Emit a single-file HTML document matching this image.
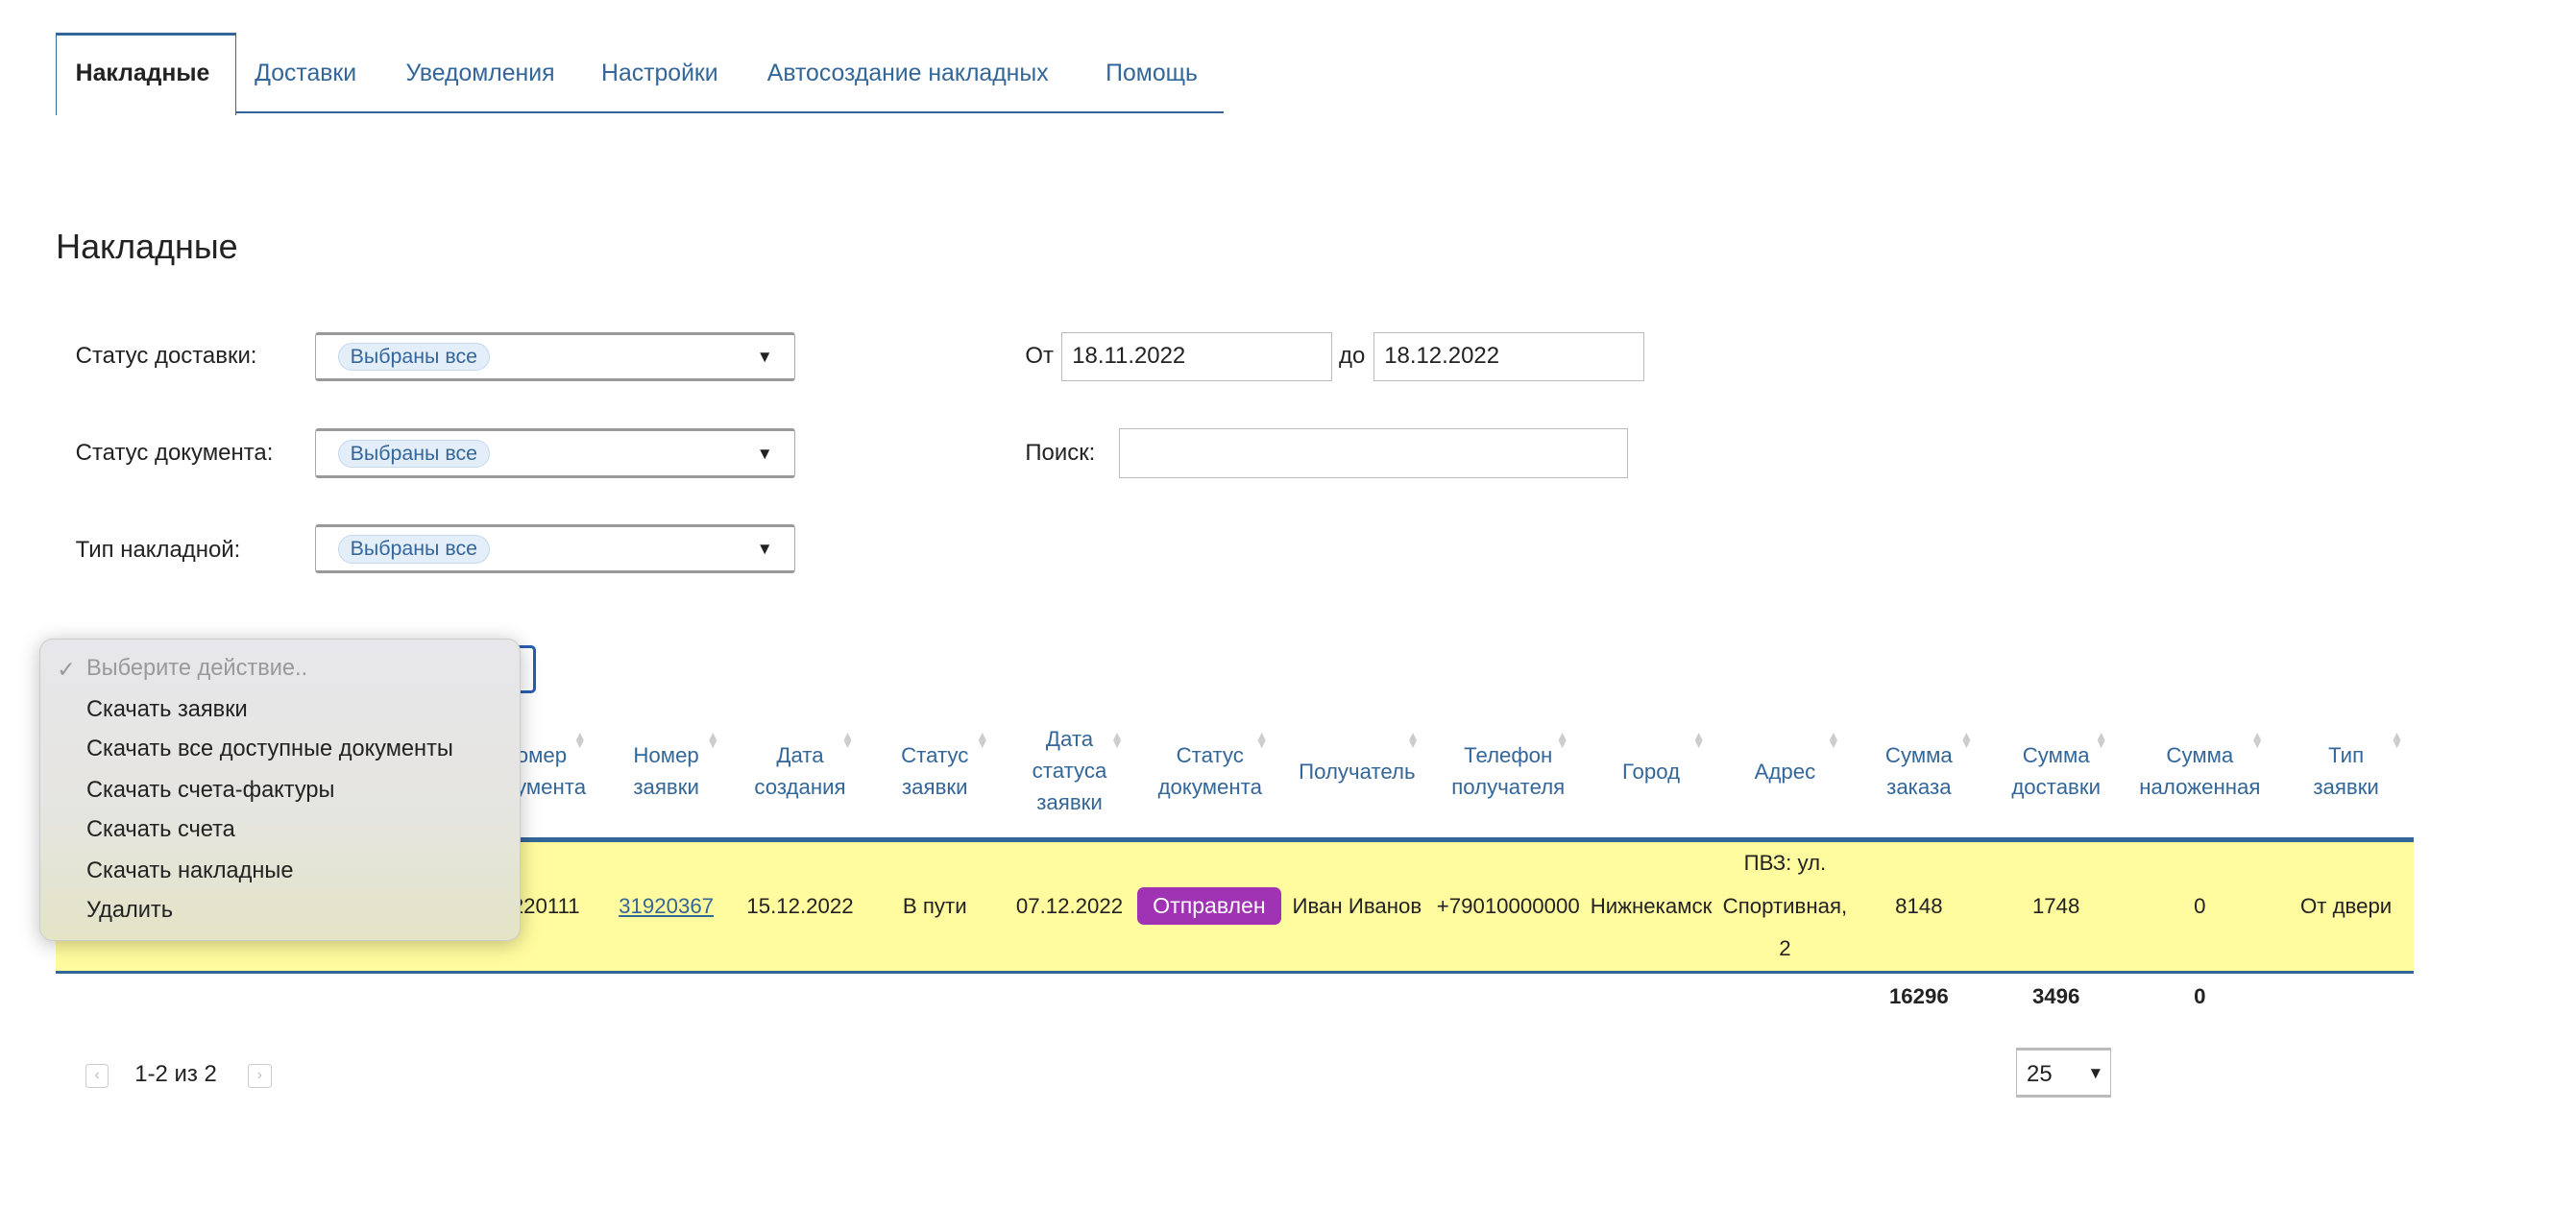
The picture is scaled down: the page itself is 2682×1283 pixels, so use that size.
<!DOCTYPE html>
<html><head><meta charset="utf-8">
<style>
html,body{margin:0;padding:0;background:#fff;}
body{width:1568px;height:750px;zoom:1.7105;position:relative;overflow:hidden;font-family:"Liberation Sans",Arial,sans-serif;color:#222;}
.a{position:absolute;}
.tabline{left:144px;top:68px;width:601px;height:0;border-top:1.5px solid #336699;}
.tabact{left:34px;top:20px;width:110px;height:50px;border:1px solid #336699;border-top:2px solid #336699;border-bottom:none;background:#fff;box-sizing:border-box;}
.tab{top:37px;font-size:14.5px;color:#336699;}
.lbl{font-size:14px;color:#222;}
.sel{width:292px;height:30px;border:1px solid #aaa;border-top:2px solid #999;border-bottom:2px solid #999;box-sizing:border-box;border-radius:2px;background:#fff;}
.pill{position:absolute;left:13px;top:5px;height:16px;line-height:16px;padding:0 7px;font-size:12.5px;color:#336699;background:#e4eef9;border:1px solid #c5d9ef;border-radius:9px;}
.arr{position:absolute;right:13px;top:8px;font-size:10px;color:#222;}
.inp{height:30px;border:1px solid #bbb;box-sizing:border-box;background:#fff;font-size:14px;line-height:28px;padding-left:6px;}
.th{font-size:13px;color:#336699;text-align:center;line-height:19.5px;}
.sort{font-size:8px;color:#ccc;line-height:5px;}
.td{font-size:13px;text-align:center;}
.menu{left:24px;top:389px;width:293px;height:184px;border-radius:8px;background:linear-gradient(#e7e6ea,#e5e5e0 60%,#e4e4c6);box-shadow:0 2px 12px rgba(0,0,0,.25);border:1px solid #ccc;box-sizing:border-box;}
.mi{position:absolute;left:28px;font-size:13.8px;color:#222;}
.pg{width:13px;height:13px;border:1px solid #ccc;border-radius:2px;font-size:9px;color:#bbb;text-align:center;line-height:13px;}
</style></head><body>
<div class="a tabline"></div>
<div class="a tabact"></div>
<div class="a tab" style="left:46px;color:#222;font-weight:bold;">Накладные</div>
<div class="a tab" style="left:155px;">Доставки</div>
<div class="a tab" style="left:247px;">Уведомления</div>
<div class="a tab" style="left:366px;">Настройки</div>
<div class="a tab" style="left:467px;">Автосоздание накладных</div>
<div class="a tab" style="left:673px;">Помощь</div>

<div class="a" style="left:34px;top:138px;font-size:21px;color:#222;">Накладные</div>

<div class="a lbl" style="left:46px;top:209px;">Статус доставки:</div>
<div class="a sel" style="left:192px;top:202px;"><span class="pill">Выбраны все</span><span class="arr">▼</span></div>
<div class="a lbl" style="left:46px;top:268px;">Статус документа:</div>
<div class="a sel" style="left:192px;top:261px;"><span class="pill">Выбраны все</span><span class="arr">▼</span></div>
<div class="a lbl" style="left:46px;top:327px;">Тип накладной:</div>
<div class="a sel" style="left:192px;top:319px;"><span class="pill">Выбраны все</span><span class="arr">▼</span></div>

<div class="a lbl" style="left:624px;top:209px;">От</div>
<div class="a inp" style="left:646px;top:202px;width:165px;">18.11.2022</div>
<div class="a lbl" style="left:815px;top:209px;">до</div>
<div class="a inp" style="left:836px;top:202px;width:165px;">18.12.2022</div>
<div class="a lbl" style="left:624px;top:268px;">Поиск:</div>
<div class="a inp" style="left:681px;top:261px;width:310px;"></div>

<div class="a" style="left:200px;top:393px;width:126px;height:29px;border:2px solid #2a5db0;border-radius:3px;box-sizing:border-box;"></div>

<div class="a" style="left:34px;top:510px;width:1435px;height:3px;background:#336699;"></div>
<div class="a" style="left:34px;top:513px;width:1435px;height:78px;background:#fffb9e;"></div>
<div class="a" style="left:34px;top:591px;width:1435px;height:2px;background:#336699;"></div>

<div class="a th" style="left:285px;top:450px;width:80px;">Номер<br>документа</div>
<div class="a th" style="left:365px;top:450px;width:81px;">Номер<br>заявки</div>
<div class="a th" style="left:446px;top:450px;width:82px;">Дата<br>создания</div>
<div class="a th" style="left:528px;top:450px;width:82px;">Статус<br>заявки</div>
<div class="a th" style="left:610px;top:440px;width:82px;">Дата<br>статуса<br>заявки</div>
<div class="a th" style="left:692px;top:450px;width:89px;">Статус<br>документа</div>
<div class="a th" style="left:781px;top:460px;width:90px;">Получатель</div>
<div class="a th" style="left:871px;top:450px;width:94px;">Телефон<br>получателя</div>
<div class="a th" style="left:961px;top:460px;width:88px;">Город</div>
<div class="a th" style="left:1046px;top:460px;width:81px;">Адрес</div>
<div class="a th" style="left:1127px;top:450px;width:82px;">Сумма<br>заказа</div>
<div class="a th" style="left:1209px;top:450px;width:85px;">Сумма<br>доставки</div>
<div class="a th" style="left:1294px;top:450px;width:90px;">Сумма<br>наложенная</div>
<div class="a th" style="left:1384px;top:450px;width:88px;">Тип<br>заявки</div>

<div class="a sort" style="left:349px;top:446px;">▲<br>▼</div>
<div class="a sort" style="left:430px;top:446px;">▲<br>▼</div>
<div class="a sort" style="left:512px;top:446px;">▲<br>▼</div>
<div class="a sort" style="left:594px;top:446px;">▲<br>▼</div>
<div class="a sort" style="left:676px;top:446px;">▲<br>▼</div>
<div class="a sort" style="left:764px;top:446px;">▲<br>▼</div>
<div class="a sort" style="left:856px;top:446px;">▲<br>▼</div>
<div class="a sort" style="left:947px;top:446px;">▲<br>▼</div>
<div class="a sort" style="left:1030px;top:446px;">▲<br>▼</div>
<div class="a sort" style="left:1112px;top:446px;">▲<br>▼</div>
<div class="a sort" style="left:1193px;top:446px;">▲<br>▼</div>
<div class="a sort" style="left:1275px;top:446px;">▲<br>▼</div>
<div class="a sort" style="left:1370px;top:446px;">▲<br>▼</div>
<div class="a sort" style="left:1455px;top:446px;">▲<br>▼</div>

<div class="a td" style="left:285px;top:544px;width:80px;">20220111</div>
<div class="a td" style="left:365px;top:544px;width:81px;"><span style="color:#336699;text-decoration:underline;">31920367</span></div>
<div class="a td" style="left:446px;top:544px;width:82px;">15.12.2022</div>
<div class="a td" style="left:528px;top:544px;width:82px;">В пути</div>
<div class="a td" style="left:610px;top:544px;width:82px;">07.12.2022</div>
<div class="a" style="left:692px;top:540px;width:88px;height:23px;background:#a032b4;border-radius:4px;color:#fff;font-size:13.5px;text-align:center;line-height:23px;">Отправлен</div>
<div class="a td" style="left:783px;top:544px;width:86px;">Иван Иванов</div>
<div class="a td" style="left:871px;top:544px;width:94px;">+79010000000</div>
<div class="a td" style="left:963px;top:544px;width:84px;">Нижнекамск</div>
<div class="a td" style="left:1046px;top:513px;width:81px;line-height:26px;">ПВЗ: ул.<br>Спортивная,<br>2</div>
<div class="a td" style="left:1127px;top:544px;width:82px;">8148</div>
<div class="a td" style="left:1209px;top:544px;width:85px;">1748</div>
<div class="a td" style="left:1294px;top:544px;width:90px;">0</div>
<div class="a td" style="left:1384px;top:544px;width:88px;">От двери</div>

<div class="a td" style="left:1127px;top:599px;width:82px;font-weight:bold;">16296</div>
<div class="a td" style="left:1209px;top:599px;width:85px;font-weight:bold;">3496</div>
<div class="a td" style="left:1294px;top:599px;width:90px;font-weight:bold;">0</div>

<div class="a pg" style="left:52px;top:648px;">‹</div>
<div class="a" style="left:82px;top:646px;font-size:14px;">1-2 из 2</div>
<div class="a pg" style="left:151px;top:648px;">›</div>
<div class="a" style="left:1227px;top:638px;width:58px;height:30px;border:1px solid #bbb;border-width:2px 1px;box-sizing:border-box;font-size:14px;"><span style="position:absolute;left:6px;top:6px;">25</span><span style="position:absolute;left:43px;top:8px;font-size:10px;">▼</span></div>

<div class="a menu">
<div class="mi" style="left:10px;top:10px;color:#999;">✓</div>
<div class="mi" style="top:10px;color:#999;">Выберите действие..</div>
<div class="mi" style="top:35px;">Скачать заявки</div>
<div class="mi" style="top:59px;">Скачать все доступные документы</div>
<div class="mi" style="top:84px;">Скачать счета-фактуры</div>
<div class="mi" style="top:108px;">Скачать счета</div>
<div class="mi" style="top:133px;">Скачать накладные</div>
<div class="mi" style="top:157px;">Удалить</div>
</div>
</body></html>
